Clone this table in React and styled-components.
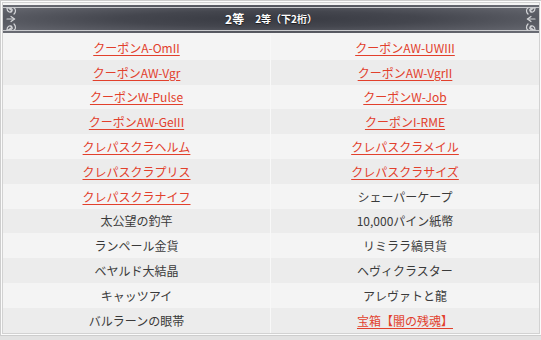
import React from "react";
import styled, { createGlobalStyle } from "styled-components";

const GlobalStyle = createGlobalStyle`
    html, body {
        margin: 0;
        padding: 0;
        background: #e2e2e2;
    }
    body {
        font-family: "Noto Sans CJK JP", "Noto Sans", sans-serif;
    }
`
const Frame = styled.div`
    width: 538px;
    border: 1px solid #cdcdcd;
    background: #fbfbfb;
    padding: 1px;
`
const Inner = styled.div`
    border: 1px solid #d2d2d2;
    background: #f4f4f4;
    padding-top: 2px;
`
const Banner = styled.div`
    position: relative;
    height: 28px;
    margin: 0 0 2px 0;
    background:
        radial-gradient(ellipse at 50% 50%, #383a42 0%, #44464e 40%, #6c6e76 100%);
    display: flex;
    align-items: center;
    justify-content: center;
    gap: 11px;
    &::before {
        content: "";
        position: absolute;
        left: 0;
        right: 0;
        top: 2px;
        bottom: 2px;
        border-top: 1px solid #c9cacd;
        border-bottom: 1px solid #c9cacd;
        pointer-events: none;
    }
`
const Title = styled.span`
    color: #fff;
    font-weight: 700;
    font-size: 12px;
    line-height: 1;
    text-shadow: 0 1px 1px rgba(0, 0, 0, 0.6);
`
const SubTitle = styled.span`
    color: #fff;
    font-weight: 700;
    font-size: 10px;
    line-height: 1;
    text-shadow: 0 1px 1px rgba(0, 0, 0, 0.6);
`
const Flourish = styled.svg`
    position: absolute;
    top: 1px;
    ${props => props.side === "left" ? "left: 2px;" : "right: 2px; transform: scaleX(-1);"}
`
const Grid = styled.div`
    display: grid;
    grid-template-columns: 1fr 1fr;
`
const Cell = styled.div`
    height: 24.8px;
    display: flex;
    align-items: center;
    justify-content: center;
    font-size: 12px;
    color: #3a3a3a;
    background: ${props => props.$alt ? "#ececec" : "#f4f4f4"};
    border-right: ${props => props.$first ? "1px solid #f8f8f8" : "none"};
`
const Link = styled.a`
    color: #e2402c;
    text-decoration: underline;
    text-underline-offset: 2px;
    text-decoration-thickness: 1px;
    cursor: pointer;
`

function Scroll({ side }) {
    return (
        <Flourish side={side} width="14" height="26" viewBox="0 0 14 26">
            <g fill="none" stroke="#d4d5d8" strokeWidth="1.2" strokeLinecap="round">
                <path d="M2 2 C2 6 5 7 7 5 C8 3 6 2 5 3.5" />
                <path d="M2 2 C6 2 7 4 6 6" />
                <path d="M9 2 C11 3 11 6 9 8" />
                <path d="M2 24 C2 20 5 19 7 21 C8 23 6 24 5 22.5" />
                <path d="M2 24 C6 24 7 22 6 20" />
                <path d="M9 24 C11 23 11 20 9 18" />
                <path d="M2 13 H9" />
                <path d="M6 10.5 L9.5 13 L6 15.5" />
            </g>
        </Flourish>
    );
}

const rows = [
    [{ text: "クーポンA-OmII", link: true }, { text: "クーポンAW-UWIII", link: true }],
    [{ text: "クーポンAW-Vgr", link: true }, { text: "クーポンAW-VgrII", link: true }],
    [{ text: "クーポンW-Pulse", link: true }, { text: "クーポンW-Job", link: true }],
    [{ text: "クーポンAW-GeIII", link: true }, { text: "クーポンI-RME", link: true }],
    [{ text: "クレパスクラヘルム", link: true }, { text: "クレパスクラメイル", link: true }],
    [{ text: "クレパスクラプリス", link: true }, { text: "クレパスクラサイズ", link: true }],
    [{ text: "クレパスクラナイフ", link: true }, { text: "シェーパーケープ" }],
    [{ text: "太公望の釣竿" }, { text: "10,000パイン紙幣" }],
    [{ text: "ランペール金貨" }, { text: "リミララ縞貝貨" }],
    [{ text: "ベヤルド大結晶" }, { text: "ヘヴィクラスター" }],
    [{ text: "キャッツアイ" }, { text: "アレヴァトと龍" }],
    [{ text: "バルラーンの眼帯" }, { text: "宝箱【闇の残魂】", link: true }],
];

export default function App() {
    return (
        <>
            <GlobalStyle />
            <Frame>
                <Inner>
                    <Banner>
                        <Scroll side="left" />
                        <Title>2等</Title>
                        <SubTitle>2等（下2桁）</SubTitle>
                        <Scroll side="right" />
                    </Banner>
                    <Grid>
                        {rows.map((row, i) =>
                            row.map((item, j) => (
                                <Cell key={`${i}-${j}`} $alt={i % 2 === 1} $first={j === 0}>
                                    {item.link ? <Link>{item.text}</Link> : item.text}
                                </Cell>
                            ))
                        )}
                    </Grid>
                </Inner>
            </Frame>
        </>
    );
}
